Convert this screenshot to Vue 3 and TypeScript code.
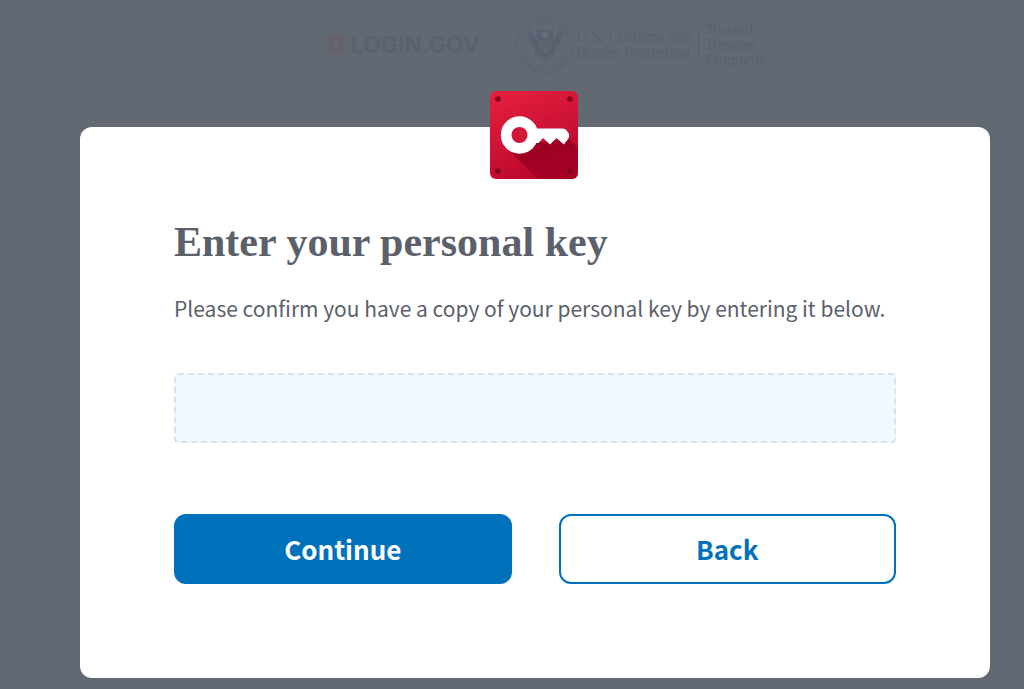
<script setup lang="ts">
import { ref } from 'vue'

const personalKey = ref('')

function submitKey(): void {
  personalKey.value = personalKey.value.trim()
}

function goBack(): void {
  personalKey.value = ''
}
</script>

<template>
  <div class="page">
    <header class="brands">
      <div class="login-brand">
        <svg class="shield" viewBox="0 0 16 21" aria-hidden="true">
          <path d="M1 0h14a1 1 0 0 1 1 1v13q0 2-2 3.300L8 21l-6-3.700Q0 16 0 14V1a1 1 0 0 1 1-1z" fill="#68606b" />
          <path d="M8 5a2.600 2.600 0 0 0-1.500 4.700V14h3V9.700A2.600 2.600 0 0 0 8 5z" fill="#656c77" />
        </svg>
        <span class="login-name">LOGIN.GOV</span>
      </div>
      <div class="agency">
        <svg class="seal" viewBox="0 0 58 58" aria-hidden="true">
          <defs>
            <path id="seal-top" d="M6 30a23 23 0 1 1 46 0" />
            <path id="seal-bottom" d="M2.500 29a26.500 26.500 0 0 0 53 0" />
          </defs>
          <circle cx="29" cy="29" r="28.300" fill="none" stroke="#5d6470" stroke-width="1" />
          <circle cx="29" cy="29" r="21.300" fill="#636a74" stroke="#6b6670" stroke-width="1" />
          <circle cx="29" cy="29" r="20" fill="none" stroke="#5f6672" stroke-width="1" />
          <text class="seal-text"><textPath href="#seal-top" startOffset="50%" text-anchor="middle">U.S. DEPARTMENT OF</textPath></text>
          <text class="seal-text"><textPath href="#seal-bottom" startOffset="50%" text-anchor="middle">HOMELAND SECURITY</textPath></text>
          <path d="M21 13q3 2 6 1h5q3 1 6-1l-1 7q4-1 8-6 2 4 0 10l-3 8q-2 5-6 8l-7 4-7-4q-4-3-6-8l-3-8q-2-6 0-10 4 5 8 6z" fill="#596070" />
          <path d="M26 17q3-3 6 0l2 1-2 1-1 3h-4z" fill="#666d77" />
          <path d="M23 25h12v6q0 4-6 7-6-3-6-7z" fill="#616873" />
          <path d="M24 27h10M25 29v5M27.500 29v7M30.500 29v7M33 29v5" fill="none" stroke="#59606e" stroke-width="1" />
          <path d="M14 26l5 7M15 31l5 6M44 26l-5 7M43 31l-5 6M22 39l5 4 4 0 5-4M18 18l3 6M40 18l-3 6" fill="none" stroke="#656c77" stroke-width="1" />
          <path d="M19 38q4 7 10 8 6-1 10-8" fill="none" stroke="#5a616f" stroke-width="1" />
        </svg>
        <div class="customs">U.S. Customs and<br />Border Protection</div>
        <div class="travelers">Trusted<br />Traveler<br />Programs</div>
      </div>
    </header>

    <main class="modal" role="dialog" aria-modal="true" aria-labelledby="key-title">
      <svg class="badge" viewBox="0 0 88 88" aria-hidden="true">
        <defs>
          <linearGradient id="badge-red" x1="0.300" y1="0" x2="0.700" y2="1">
            <stop offset="0" stop-color="#e21e3e" />
            <stop offset="1" stop-color="#b8062b" />
          </linearGradient>
          <linearGradient id="badge-shadow" x1="0.300" y1="0" x2="0.700" y2="1">
            <stop offset="0" stop-color="#970023" />
            <stop offset="1" stop-color="#a90226" />
          </linearGradient>
        </defs>
        <rect width="88" height="88" rx="6" fill="url(#badge-red)" />
        <path d="M16.500 57L78 47l10 10v25a6 6 0 0 1-6 6H47.500z" fill="url(#badge-shadow)" />
        <g fill="#850521">
          <circle cx="8" cy="8" r="2.800" />
          <circle cx="80" cy="8" r="2.800" />
          <circle cx="8" cy="80" r="2.800" />
          <circle cx="80" cy="80" r="2.800" />
        </g>
        <circle cx="29.500" cy="44" r="18.700" fill="#fff" />
        <path d="M44 37.500h29q2 0 3.200 1.500l2.300 3q1 1.500.5 3.500l-.5 2-4.700 6-7.300-6.500-6.500 6.500-7-6.500-4.500 5H44z" fill="#fff" />
        <circle cx="29.500" cy="44" r="8" fill="#d0173a" />
      </svg>

      <h1 id="key-title">Enter your personal key</h1>
      <p id="key-help">Please confirm you have a copy of your personal key by entering it below.</p>
      <form @submit.prevent="submitKey">
        <input v-model="personalKey" class="key-input" type="text" aria-label="Personal key" aria-describedby="key-help" autocomplete="off" />
        <div class="actions">
          <button class="button primary" type="submit">Continue</button>
          <button class="button secondary" type="button" @click="goBack">Back</button>
        </div>
      </form>
    </main>
  </div>
</template>

<style>
body {
  background: #626973;
}
</style>

<style scoped>
.page {
  box-sizing: border-box;
  min-height: 100vh;
  padding: 16px 34px 10px 80px;
  background: #626973;
  font-family: "Noto Sans CJK SC", "Open Sans", sans-serif;
}

.brands {
  display: flex;
  align-items: center;
  justify-content: center;
  gap: 36px;
  height: 58px;
  padding-left: 24px;
  color: #5a616f;
}

.login-brand,
.agency {
  display: flex;
  align-items: center;
}

.login-brand {
  gap: 7px;
}

.shield {
  width: 16px;
  height: 21px;
}

.login-name {
  font: 700 23px/24px Inter, sans-serif;
}

.seal {
  width: 58px;
  height: 58px;
}

.seal-text {
  font: 700 5px "Liberation Serif", serif;
  fill: #5b6270;
}

.customs {
  margin-left: 2px;
  padding-right: 7px;
  font: 400 16px/16px "Liberation Serif", serif;
  white-space: nowrap;
}

.travelers {
  position: relative;
  padding-left: 7px;
  font: 400 14px/15px Roboto, sans-serif;
}

.travelers::before {
  content: "";
  position: absolute;
  top: 9px;
  bottom: 8px;
  left: 0;
  width: 1px;
  background: #565d6b;
}

.modal {
  position: relative;
  box-sizing: border-box;
  margin-top: 53px;
  padding: 90px 94px 94px;
  border-radius: 12px;
  background: #fff;
  color: #5b616b;
}

.badge {
  position: absolute;
  top: -36px;
  left: calc(50% - 45px);
  width: 88px;
  height: 88px;
}

h1 {
  margin: 0;
  font: 700 42px/50px "Liberation Serif", serif;
}

p {
  margin: 24px 0 0;
  font-size: 21px;
  line-height: 34px;
}

.key-input {
  display: block;
  box-sizing: border-box;
  width: 100%;
  height: 70px;
  margin-top: 48px;
  padding: 0 20px;
  border: 2px dashed #d8e2f1;
  border-radius: 4px;
  outline: none;
  background: #f1f8ff;
  color: #5b616b;
  font: inherit;
  font-size: 24px;
}

.actions {
  display: grid;
  grid-template-columns: 1fr 1fr;
  gap: 47px;
  margin-top: 71px;
}

.button {
  height: 70px;
  padding: 0;
  border: 2px solid #0071bb;
  border-radius: 12px;
  font-family: inherit;
  font-size: 26px;
  font-weight: 700;
  line-height: 40px;
  cursor: pointer;
}

.primary {
  background: #0071bb;
  color: #fff;
}

.secondary {
  background: #fff;
  color: #0071bb;
}
</style>
